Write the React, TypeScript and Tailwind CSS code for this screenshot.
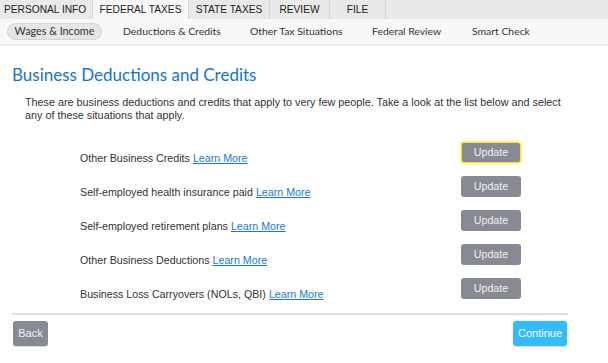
import React from "react";

const rows = [
  "Other Business Credits",
  "Self-employed health insurance paid",
  "Self-employed retirement plans",
  "Other Business Deductions",
  "Business Loss Carryovers (NOLs, QBI)",
];

export default function App() {
  return (
    <div className="w-[608px] h-[363px] bg-white overflow-hidden" style={{ fontFamily: '"Liberation Sans", Arial, sans-serif' }}>
      {/* top tabs */}
      <div className="flex h-[19px] bg-[#e9e9e9] text-[10.2px] text-[#222] leading-[19px] whitespace-nowrap">
        <div className="w-[92px] pl-[4px]">PERSONAL INFO</div>
        <div className="w-[97px] bg-[#f7f7f7] text-center border-x border-[#d6d6d6]">FEDERAL TAXES</div>
        <div className="w-[81px] text-center border-r border-[#d6d6d6]">STATE TAXES</div>
        <div className="w-[60px] text-center border-r border-[#d6d6d6]">REVIEW</div>
        <div className="w-[56px] text-center border-r border-[#d6d6d6]">FILE</div>
      </div>
      {/* sub nav */}
      <div className="flex items-center h-[27px] bg-[#f8f8f8] border-b-[2px] border-[#f0f0f0] text-[10.4px] text-[#333] pl-[7px] whitespace-nowrap" style={{ fontFamily: 'Lato, "Open Sans", sans-serif' }}>
        <div className="h-[17px] w-[95px] rounded-full bg-[#e6e6e6] border border-[#d4d4d4] flex items-center justify-center text-[10.8px]">Wages &amp; Income</div>
        <div className="ml-[21px] w-[127px]">Deductions &amp; Credits</div>
        <div className="w-[122px]">Other Tax Situations</div>
        <div className="w-[100px]">Federal Review</div>
        <div>Smart Check</div>
      </div>
      <div className="px-[12px]">
        <h1 className="mt-[19px] text-[17px] leading-[20px] text-[#1a73c8]" style={{ fontFamily: 'Lato, "Open Sans", sans-serif' }}>Business Deductions and Credits</h1>
        <p className="mt-[11px] ml-[13px] w-[545px] text-[10.8px] leading-[13px] text-[#333]">
          These are business deductions and credits that apply to very few people. Take a look at the list below and select any of these situations that apply.
        </p>
        <div className="mt-[20px]">
          {rows.map((r, i) => (
            <div key={r} className="flex items-start h-[34px]">
              <div className="ml-[68px] flex-1 pt-[9px] text-[10.7px] leading-[14px] text-[#333]">
                {r} <a className="text-[#1a7ad0] underline" href="#">Learn More</a>
              </div>
              <button className={`mr-[75px] w-[60px] h-[21px] rounded-[3px] bg-[#878a92] text-[10.7px] text-[#f0f0f0] ${i === 0 ? "border border-[#ffe033] shadow-[0_0_2px_1px_#fff176]" : ""}`}>Update</button>
            </div>
          ))}
        </div>
        <div className="mt-[1px] h-[2px] w-[556px] bg-[#dedede]" />
        <div className="flex justify-between mt-[6px] w-[554px] ml-[1px]">
          <button className="w-[35px] h-[25px] rounded-[3px] bg-[#878a92] text-[11px] text-[#f0f0f0] shadow-[0_1px_1px_rgba(0,0,0,0.15)]">Back</button>
          <button className="w-[54px] h-[25px] rounded-[3px] bg-[#33bcf7] text-[11px] text-white shadow-[0_1px_1px_rgba(0,0,0,0.15)]">Continue</button>
        </div>
      </div>
    </div>
  );
}
